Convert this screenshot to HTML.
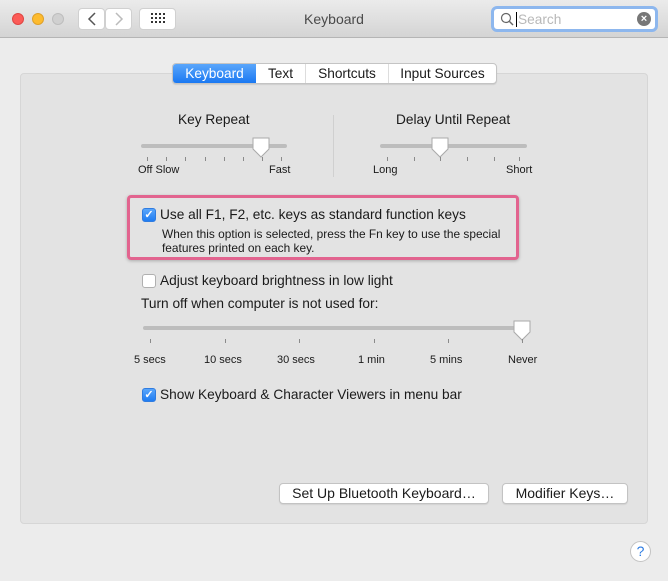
<!DOCTYPE html>
<html><head><style>
*{margin:0;padding:0;box-sizing:border-box}
body{width:668px;height:581px;background:#ececec;font-family:"Liberation Sans",sans-serif;font-size:13.7px;color:#1a1a1a;position:relative;overflow:hidden}
.a{position:absolute;white-space:nowrap}
.tb{left:0;top:0;width:668px;height:38px;background:linear-gradient(#ebebeb,#d4d4d4);border-bottom:1px solid #b5b5b5}
.dot{width:12px;height:12px;border-radius:50%;top:13px}
.nb{background:#fff;border:1px solid #d0d0d0;border-radius:4px;height:22px;top:8px}
.panel{left:20px;top:73px;width:628px;height:451px;background:#e3e3e3;border:1px solid #d6d6d6;border-radius:4px}
.tabs{left:172px;top:63px;height:21px;display:flex;border:1px solid #c4c4c4;border-radius:4px;background:#fff;overflow:hidden;box-shadow:0 1px 1px rgba(0,0,0,.1);font-size:13.7px}
.tabs div{line-height:19px;border-left:1px solid #ddd;text-align:center}
.tabs .on{background:linear-gradient(#5aa6fb,#1a78f2);color:#fff;border:none}
.track{height:4px;background:#bdbdbd;border-radius:2px}
.tick{width:1px;height:4px;background:#8a8a8a}
.cb{width:14px;height:14px;border-radius:3px;border:1px solid #b0b0b0;background:#fff}
.cb.on{background:linear-gradient(#5aa6fb,#1f7cf2);border-color:#2f7ce0;color:#fff;font-size:11px;line-height:12px;text-align:center;font-weight:bold}
.btn{background:#fff;border:1px solid #c3c3c3;border-radius:4px;height:21px;line-height:19px;text-align:center;box-shadow:0 1px 1px rgba(0,0,0,.08);font-size:14px}
.lbl{font-size:11px}
</style></head><body>
<div class="a tb"></div>
<div class="a dot" style="left:12px;background:#fc5b57;border:1px solid #de4643"></div>
<div class="a dot" style="left:32px;background:#fdbb2e;border:1px solid #dea02a"></div>
<div class="a dot" style="left:52px;background:#d0d0d0;border:1px solid #bdbdbd"></div>
<div class="a nb" style="left:78px;width:27px"></div>
<div class="a nb" style="left:105px;width:27px"></div>
<svg class="a" style="left:78px;top:8px" width="54" height="22"><path d="M17 5 L11 11 L17 17" stroke="#555" stroke-width="1.5" fill="none"/><path d="M38 5 L44 11 L38 17" stroke="#bbb" stroke-width="1.5" fill="none"/></svg>
<div class="a nb" style="left:139px;width:37px"></div>
<svg class="a" style="left:150px;top:12px" width="16" height="14" fill="#333"><rect x="1" y="1" width="2" height="2"/><rect x="5" y="1" width="2" height="2"/><rect x="9" y="1" width="2" height="2"/><rect x="13" y="1" width="2" height="2"/><rect x="1" y="5" width="2" height="2"/><rect x="5" y="5" width="2" height="2"/><rect x="9" y="5" width="2" height="2"/><rect x="13" y="5" width="2" height="2"/><rect x="1" y="9" width="2" height="2"/><rect x="5" y="9" width="2" height="2"/><rect x="9" y="9" width="2" height="2"/><rect x="13" y="9" width="2" height="2"/></svg>
<div class="a" style="left:0;width:668px;text-align:center;top:11px;font-size:14px;color:#4a4a4a">Keyboard</div>
<div class="a" style="left:491px;top:6px;width:167px;height:26px;border:3px solid #8db7ee;border-radius:6px;background:#fff"></div>
<svg class="a" style="left:500px;top:12px" width="14" height="14"><circle cx="6" cy="6" r="4.5" stroke="#666" stroke-width="1.2" fill="none"/><path d="M9.5 9.5 L13 13" stroke="#666" stroke-width="1.4"/></svg>
<div class="a" style="left:516px;top:12px;width:1px;height:15px;background:#000"></div>
<div class="a" style="left:518px;top:12px;color:#b8b8b8">Search</div>
<div class="a" style="left:637px;top:12px;width:14px;height:14px;border-radius:50%;background:#777;color:#fff;font-size:11px;line-height:14px;text-align:center;font-weight:bold">×</div>

<div class="a panel"></div>
<div class="a tabs"><div class="on" style="width:83px">Keyboard</div><div style="border:none;width:49px">Text</div><div style="width:83px">Shortcuts</div><div style="width:108px">Input Sources</div></div>

<div class="a" style="left:178px;top:112px">Key Repeat</div>
<div class="a track" style="left:141px;top:144px;width:146px"></div>
<svg class="a" style="left:251px;top:137px" width="20" height="22"><path d="M2 1 H18 V12 L10 20 L2 12 Z" fill="#fff" stroke="#aaa"/></svg>
<div class="a tick" style="left:147px;top:157px"></div><div class="a tick" style="left:166px;top:157px"></div><div class="a tick" style="left:185px;top:157px"></div><div class="a tick" style="left:205px;top:157px"></div><div class="a tick" style="left:224px;top:157px"></div><div class="a tick" style="left:243px;top:157px"></div><div class="a tick" style="left:262px;top:157px"></div><div class="a tick" style="left:281px;top:157px"></div>
<div class="a lbl" style="left:138px;top:164px">Off Slow</div>
<div class="a lbl" style="left:269px;top:164px">Fast</div>
<div class="a" style="left:333px;top:115px;width:1px;height:62px;background:#d0d0d0"></div>
<div class="a" style="left:396px;top:112px">Delay Until Repeat</div>
<div class="a track" style="left:380px;top:144px;width:147px"></div>
<svg class="a" style="left:430px;top:137px" width="20" height="22"><path d="M2 1 H18 V12 L10 20 L2 12 Z" fill="#fff" stroke="#aaa"/></svg>
<div class="a tick" style="left:387px;top:157px"></div><div class="a tick" style="left:414px;top:157px"></div><div class="a tick" style="left:440px;top:157px"></div><div class="a tick" style="left:467px;top:157px"></div><div class="a tick" style="left:494px;top:157px"></div><div class="a tick" style="left:519px;top:157px"></div>
<div class="a lbl" style="left:373px;top:164px">Long</div>
<div class="a lbl" style="left:506px;top:164px">Short</div>

<div class="a" style="left:127px;top:195px;width:392px;height:65px;border:3px solid #e2648f;border-radius:4px;box-shadow:0 1px 3px rgba(0,0,0,.25)"></div>
<div class="a cb on" style="left:142px;top:208px">✓</div>
<div class="a" style="left:160px;top:207px">Use all F1, F2, etc. keys as standard function keys</div>
<div class="a" style="left:162px;top:227px;line-height:14px;font-size:11.9px">When this option is selected, press the Fn key to use the special<br>features printed on each key.</div>

<div class="a cb" style="left:142px;top:274px"></div>
<div class="a" style="left:160px;top:273px">Adjust keyboard brightness in low light</div>
<div class="a" style="left:141px;top:296px">Turn off when computer is not used for:</div>
<div class="a track" style="left:143px;top:326px;width:378px"></div>
<svg class="a" style="left:512px;top:320px" width="20" height="22"><path d="M2 1 H18 V12 L10 20 L2 12 Z" fill="#fff" stroke="#aaa"/></svg>
<div class="a tick" style="left:150px;top:339px"></div><div class="a tick" style="left:225px;top:339px"></div><div class="a tick" style="left:299px;top:339px"></div><div class="a tick" style="left:374px;top:339px"></div><div class="a tick" style="left:448px;top:339px"></div><div class="a tick" style="left:522px;top:339px"></div>
<div class="a lbl" style="left:134px;top:354px">5 secs</div>
<div class="a lbl" style="left:204px;top:354px">10 secs</div>
<div class="a lbl" style="left:277px;top:354px">30 secs</div>
<div class="a lbl" style="left:358px;top:354px">1 min</div>
<div class="a lbl" style="left:430px;top:354px">5 mins</div>
<div class="a lbl" style="left:508px;top:354px">Never</div>

<div class="a cb on" style="left:142px;top:388px">✓</div>
<div class="a" style="left:160px;top:387px">Show Keyboard &amp; Character Viewers in menu bar</div>

<div class="a btn" style="left:279px;top:483px;width:210px">Set Up Bluetooth Keyboard…</div>
<div class="a btn" style="left:502px;top:483px;width:126px">Modifier Keys…</div>
<div class="a" style="left:630px;top:541px;width:21px;height:21px;border-radius:50%;background:#fff;border:1px solid #c3c3c3;color:#2a7ae2;text-align:center;line-height:19px;font-size:14px">?</div>
</body></html>
